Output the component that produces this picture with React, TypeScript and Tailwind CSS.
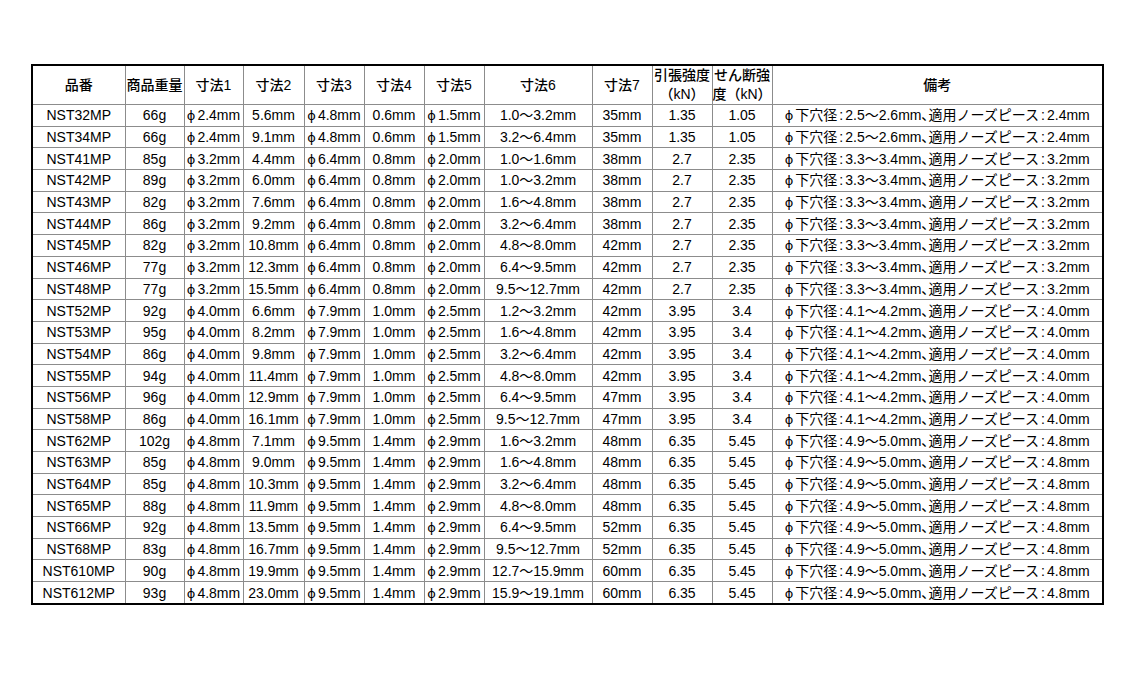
import React from "react";

type Row = [string, string, string, string, string, string, string, string, string, string, string, string];

const rows: Row[] = [
  ["NST32MP", "66g", "φ2.4mm", "5.6mm", "φ4.8mm", "0.6mm", "φ1.5mm", "1.0〜3.2mm", "35mm", "1.35", "1.05", "2.5〜2.6mm|2.4mm"],
  ["NST34MP", "66g", "φ2.4mm", "9.1mm", "φ4.8mm", "0.6mm", "φ1.5mm", "3.2〜6.4mm", "35mm", "1.35", "1.05", "2.5〜2.6mm|2.4mm"],
  ["NST41MP", "85g", "φ3.2mm", "4.4mm", "φ6.4mm", "0.8mm", "φ2.0mm", "1.0〜1.6mm", "38mm", "2.7", "2.35", "3.3〜3.4mm|3.2mm"],
  ["NST42MP", "89g", "φ3.2mm", "6.0mm", "φ6.4mm", "0.8mm", "φ2.0mm", "1.0〜3.2mm", "38mm", "2.7", "2.35", "3.3〜3.4mm|3.2mm"],
  ["NST43MP", "82g", "φ3.2mm", "7.6mm", "φ6.4mm", "0.8mm", "φ2.0mm", "1.6〜4.8mm", "38mm", "2.7", "2.35", "3.3〜3.4mm|3.2mm"],
  ["NST44MP", "86g", "φ3.2mm", "9.2mm", "φ6.4mm", "0.8mm", "φ2.0mm", "3.2〜6.4mm", "38mm", "2.7", "2.35", "3.3〜3.4mm|3.2mm"],
  ["NST45MP", "82g", "φ3.2mm", "10.8mm", "φ6.4mm", "0.8mm", "φ2.0mm", "4.8〜8.0mm", "42mm", "2.7", "2.35", "3.3〜3.4mm|3.2mm"],
  ["NST46MP", "77g", "φ3.2mm", "12.3mm", "φ6.4mm", "0.8mm", "φ2.0mm", "6.4〜9.5mm", "42mm", "2.7", "2.35", "3.3〜3.4mm|3.2mm"],
  ["NST48MP", "77g", "φ3.2mm", "15.5mm", "φ6.4mm", "0.8mm", "φ2.0mm", "9.5〜12.7mm", "42mm", "2.7", "2.35", "3.3〜3.4mm|3.2mm"],
  ["NST52MP", "92g", "φ4.0mm", "6.6mm", "φ7.9mm", "1.0mm", "φ2.5mm", "1.2〜3.2mm", "42mm", "3.95", "3.4", "4.1〜4.2mm|4.0mm"],
  ["NST53MP", "95g", "φ4.0mm", "8.2mm", "φ7.9mm", "1.0mm", "φ2.5mm", "1.6〜4.8mm", "42mm", "3.95", "3.4", "4.1〜4.2mm|4.0mm"],
  ["NST54MP", "86g", "φ4.0mm", "9.8mm", "φ7.9mm", "1.0mm", "φ2.5mm", "3.2〜6.4mm", "42mm", "3.95", "3.4", "4.1〜4.2mm|4.0mm"],
  ["NST55MP", "94g", "φ4.0mm", "11.4mm", "φ7.9mm", "1.0mm", "φ2.5mm", "4.8〜8.0mm", "42mm", "3.95", "3.4", "4.1〜4.2mm|4.0mm"],
  ["NST56MP", "96g", "φ4.0mm", "12.9mm", "φ7.9mm", "1.0mm", "φ2.5mm", "6.4〜9.5mm", "47mm", "3.95", "3.4", "4.1〜4.2mm|4.0mm"],
  ["NST58MP", "86g", "φ4.0mm", "16.1mm", "φ7.9mm", "1.0mm", "φ2.5mm", "9.5〜12.7mm", "47mm", "3.95", "3.4", "4.1〜4.2mm|4.0mm"],
  ["NST62MP", "102g", "φ4.8mm", "7.1mm", "φ9.5mm", "1.4mm", "φ2.9mm", "1.6〜3.2mm", "48mm", "6.35", "5.45", "4.9〜5.0mm|4.8mm"],
  ["NST63MP", "85g", "φ4.8mm", "9.0mm", "φ9.5mm", "1.4mm", "φ2.9mm", "1.6〜4.8mm", "48mm", "6.35", "5.45", "4.9〜5.0mm|4.8mm"],
  ["NST64MP", "85g", "φ4.8mm", "10.3mm", "φ9.5mm", "1.4mm", "φ2.9mm", "3.2〜6.4mm", "48mm", "6.35", "5.45", "4.9〜5.0mm|4.8mm"],
  ["NST65MP", "88g", "φ4.8mm", "11.9mm", "φ9.5mm", "1.4mm", "φ2.9mm", "4.8〜8.0mm", "48mm", "6.35", "5.45", "4.9〜5.0mm|4.8mm"],
  ["NST66MP", "92g", "φ4.8mm", "13.5mm", "φ9.5mm", "1.4mm", "φ2.9mm", "6.4〜9.5mm", "52mm", "6.35", "5.45", "4.9〜5.0mm|4.8mm"],
  ["NST68MP", "83g", "φ4.8mm", "16.7mm", "φ9.5mm", "1.4mm", "φ2.9mm", "9.5〜12.7mm", "52mm", "6.35", "5.45", "4.9〜5.0mm|4.8mm"],
  ["NST610MP", "90g", "φ4.8mm", "19.9mm", "φ9.5mm", "1.4mm", "φ2.9mm", "12.7〜15.9mm", "60mm", "6.35", "5.45", "4.9〜5.0mm|4.8mm"],
  ["NST612MP", "93g", "φ4.8mm", "23.0mm", "φ9.5mm", "1.4mm", "φ2.9mm", "15.9〜19.1mm", "60mm", "6.35", "5.45", "4.9〜5.0mm|4.8mm"],
];

const widths = [92, 59, 59, 61, 60, 60, 60, 108, 60, 60, 60, 330];

function Phi() {
  return <span className="mr-[2px] inline-block font-['DejaVu_Sans'] text-[13px]">ϕ</span>;
}

function Note({ text }: { text: string }) {
  const [a, b] = text.split("|");
  return (
    <>
      <Phi />
      下穴径<span className="mx-[2px]">:</span>
      {a}
      <span className="[font-feature-settings:'palt']">、</span>
      適用ノーズピース<span className="mx-[2px]">:</span>
      {b}
    </>
  );
}

function Cell({ text, col }: { text: string; col: number }) {
  if (col === 11) return <Note text={text} />;
  if (text.startsWith("φ")) {
    return (
      <>
        <Phi />
        {text.slice(1)}
      </>
    );
  }
  return <>{text}</>;
}

export default function App() {
  const th = "border border-[#8c8c8c] p-0 text-center align-middle font-medium leading-[19px] whitespace-nowrap";
  const td = "border border-[#8c8c8c] p-0 text-center align-middle whitespace-nowrap";
  return (
    <div
      className="min-h-[675px] w-[1125px] bg-white pt-[64px] pl-[31px] text-black"
      style={{ fontFamily: '"Liberation Sans", Arial, "Noto Sans CJK JP", sans-serif' }}
    >
      <div className="w-[1073px] border-2 border-black">
        <table className="w-[1069px] table-fixed border-collapse border-hidden text-[14px] leading-none">
          <colgroup>
            {widths.map((w, i) => (
              <col key={i} style={{ width: w }} />
            ))}
          </colgroup>
          <thead>
            <tr className="h-[36px]">
              <th className={th}>品番</th>
              <th className={th}>商品重量</th>
              <th className={th}>寸法1</th>
              <th className={th}>寸法2</th>
              <th className={th}>寸法3</th>
              <th className={th}>寸法4</th>
              <th className={th}>寸法5</th>
              <th className={th}>寸法6</th>
              <th className={th}>寸法7</th>
              <th className={th}>
                引張強度
                <br />
                （kN）
              </th>
              <th className={th}>
                せん断強
                <br />
                度（kN）
              </th>
              <th className={th}>備考</th>
            </tr>
          </thead>
          <tbody>
            {rows.map((r, i) => (
              <tr key={i} className="h-[21.7px]">
                {r.map((c, j) => (
                  <td key={j} className={td}>
                    <Cell text={c} col={j} />
                  </td>
                ))}
              </tr>
            ))}
          </tbody>
        </table>
      </div>
    </div>
  );
}
